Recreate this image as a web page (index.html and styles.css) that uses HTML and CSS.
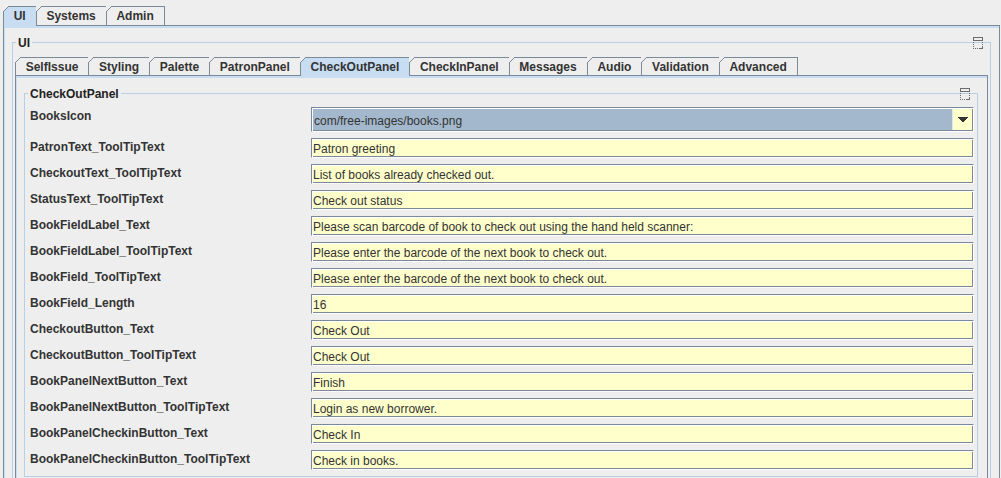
FILE: index.html
```html
<!DOCTYPE html>
<html>
<head>
<meta charset="utf-8">
<title>Settings</title>
<link rel="stylesheet" href="styles.css">
</head>
<body>
<div class="tabpane outer">
  <div class="tabs">
    <div class="tab sel">UI</div>
    <div class="tab">Systems</div>
    <div class="tab">Admin</div>
  </div>
  <div class="tabbody outer-body">
    <div class="titled ui-panel">
      <span class="title">UI</span>
      <svg class="dock" width="11" height="13" viewBox="0 0 11 13">
        <rect x="0.5" y="0.5" width="9" height="3" fill="#eeeeee" stroke="#6b6b6b"/>
        <path d="M0.5 5V12M9.5 5V9M0 11.5H7" stroke="#6b6b6b" stroke-dasharray="1 1" fill="none"/>
        <path d="M7 11.5H10M9.5 9V12" stroke="#6b6b6b" fill="none"/>
      </svg>
      <div class="tabpane inner">
        <div class="tabs">
          <div class="tab">SelfIssue</div>
          <div class="tab">Styling</div>
          <div class="tab">Palette</div>
          <div class="tab">PatronPanel</div>
          <div class="tab sel">CheckOutPanel</div>
          <div class="tab">CheckInPanel</div>
          <div class="tab">Messages</div>
          <div class="tab">Audio</div>
          <div class="tab">Validation</div>
          <div class="tab">Advanced</div>
        </div>
        <div class="tabbody inner-body">
          <div class="titled cop-panel">
            <span class="title">CheckOutPanel</span>
            <svg class="dock" width="11" height="13" viewBox="0 0 11 13">
              <rect x="0.5" y="0.5" width="9" height="3" fill="#eeeeee" stroke="#6b6b6b"/>
              <path d="M0.5 5V12M9.5 5V9M0 11.5H7" stroke="#6b6b6b" stroke-dasharray="1 1" fill="none"/>
              <path d="M7 11.5H10M9.5 9V12" stroke="#6b6b6b" fill="none"/>
            </svg>
            <div class="form">
              <div class="lbl">BooksIcon</div>
              <div class="combo">
                <span class="combo-val">com/free-images/books.png</span>
                <span class="combo-btn">
                  <svg width="10" height="5" viewBox="0 0 10 5"><path d="M0 0h10v1h-1v1h-1v1h-1v1h-1v1h-2v-1h-1v-1h-1v-1h-1v-1h-1z" fill="#333333"/></svg>
                </span>
              </div>

              <div class="lbl">PatronText_ToolTipText</div>
              <div class="field">Patron greeting</div>

              <div class="lbl">CheckoutText_ToolTipText</div>
              <div class="field">List of books already checked out.</div>

              <div class="lbl">StatusText_ToolTipText</div>
              <div class="field">Check out status</div>

              <div class="lbl">BookFieldLabel_Text</div>
              <div class="field">Please scan barcode of book to check out using the hand held scanner:</div>

              <div class="lbl">BookFieldLabel_ToolTipText</div>
              <div class="field">Please enter the barcode of the next book to check out.</div>

              <div class="lbl">BookField_ToolTipText</div>
              <div class="field">Please enter the barcode of the next book to check out.</div>

              <div class="lbl">BookField_Length</div>
              <div class="field">16</div>

              <div class="lbl">CheckoutButton_Text</div>
              <div class="field">Check Out</div>

              <div class="lbl">CheckoutButton_ToolTipText</div>
              <div class="field">Check Out</div>

              <div class="lbl">BookPanelNextButton_Text</div>
              <div class="field">Finish</div>

              <div class="lbl">BookPanelNextButton_ToolTipText</div>
              <div class="field">Login as new borrower.</div>

              <div class="lbl">BookPanelCheckinButton_Text</div>
              <div class="field">Check In</div>

              <div class="lbl">BookPanelCheckinButton_ToolTipText</div>
              <div class="field">Check in books.</div>
            </div>
          </div>
        </div>
      </div>
    </div>
  </div>
</div>
</body>
</html>
```

FILE: styles.css
```css
* { box-sizing: border-box; }

html, body { margin: 0; }

body {
  background: #eeeeee;
  padding-top: 6px;
  height: 478px;
  overflow: hidden;
  font-family: "Liberation Sans", Arial, sans-serif;
  font-size: 12px;
  color: #333333;
}

.outer {
  margin-left: 3px;
  width: 997px;
}

/* ---- tab strips ---- */
.tabs {
  display: flex;
  align-items: flex-start;
  position: relative;
  z-index: 1;
  height: 19px;
}

.inner .tabs { height: 18px; }

.tab {
  position: relative;
  height: 19px;
  padding: 1px 10px 0 9.7px;
  border-top: 1px solid #7a8a99;
  border-left: 1px solid #7a8a99;
  background: #eeeeee;
  font-weight: bold;
  line-height: 16px;
  white-space: nowrap;
  color: #333333;
}

.inner .tab { height: 18px; }

.tab:last-child { border-right: 1px solid #7a8a99; }

.tab::before {
  content: "";
  position: absolute;
  top: -1px;
  left: -1px;
  width: 6px;
  height: 6px;
  background: linear-gradient(to bottom right, #eeeeee 0 42%, #7a8a99 42% 58%, transparent 58%);
}

.tab.sel {
  height: 20px;
  background: #c8ddf2;
}

.inner .tab.sel { height: 19px; }

/* ---- tab bodies ---- */
.tabbody {
  border: 1px solid #7a8a99;
  box-shadow: inset 1px 2px 0 #c8ddf2;
}

.outer-body {
  padding: 16px 8px 20px 8px;
}

.inner-body {
  padding: 17px 9px 20px 8px;
}

/* ---- titled borders ---- */
.titled {
  position: relative;
  border: 1px solid #b8cfe5;
}

.title {
  position: absolute;
  left: 3px;
  top: -8px;
  padding: 0 2px;
  background: #eeeeee;
  font-weight: bold;
  line-height: 16px;
  color: #222222;
}

.dock {
  position: absolute;
  top: -6px;
  right: 6px;
  display: block;
}

.ui-panel {
  padding: 14px 2px 20px 2px;
}

.cop-panel {
  padding: 13px 3px 6px 5px;
}

/* ---- form ---- */
.form {
  display: grid;
  grid-template-columns: 281px 1fr;
  row-gap: 6px;
}

.lbl {
  align-self: start;
  padding-top: 1px;
  line-height: 16px;
  font-weight: bold;
  white-space: nowrap;
  color: #333333;
}

.field {
  height: 20px;
  padding: 2px 0 0 1px;
  border: 1px solid #7a8a99;
  border-right-color: #ffffff;
  border-bottom-color: #ffffff;
  box-shadow: inset 1px 1px 0 #ffffff, inset -1px -1px 0 #7a8a99;
  background: #ffffcc;
  line-height: 16px;
  white-space: nowrap;
  overflow: hidden;
  color: #333333;
}

.combo {
  display: flex;
  height: 25px;
  border: 1px solid #7a8a99;
  border-right-color: #ffffff;
  border-bottom-color: #ffffff;
  box-shadow: inset 1px 1px 0 #ffffff, inset -1px -1px 0 #7a8a99;
  background: #a3b8cc;
}

.combo-val {
  flex: 1;
  padding: 3px 0 0 2px;
  line-height: 20px;
  color: #333333;
  white-space: nowrap;
}

.combo-btn {
  width: 20px;
  margin: 1px 1px 1px 0;
  border-left: 1px solid #dde6ee;
  background: #ffffcc;
  display: flex;
  align-items: center;
  justify-content: center;
}

.combo-btn svg { display: block; }
```
